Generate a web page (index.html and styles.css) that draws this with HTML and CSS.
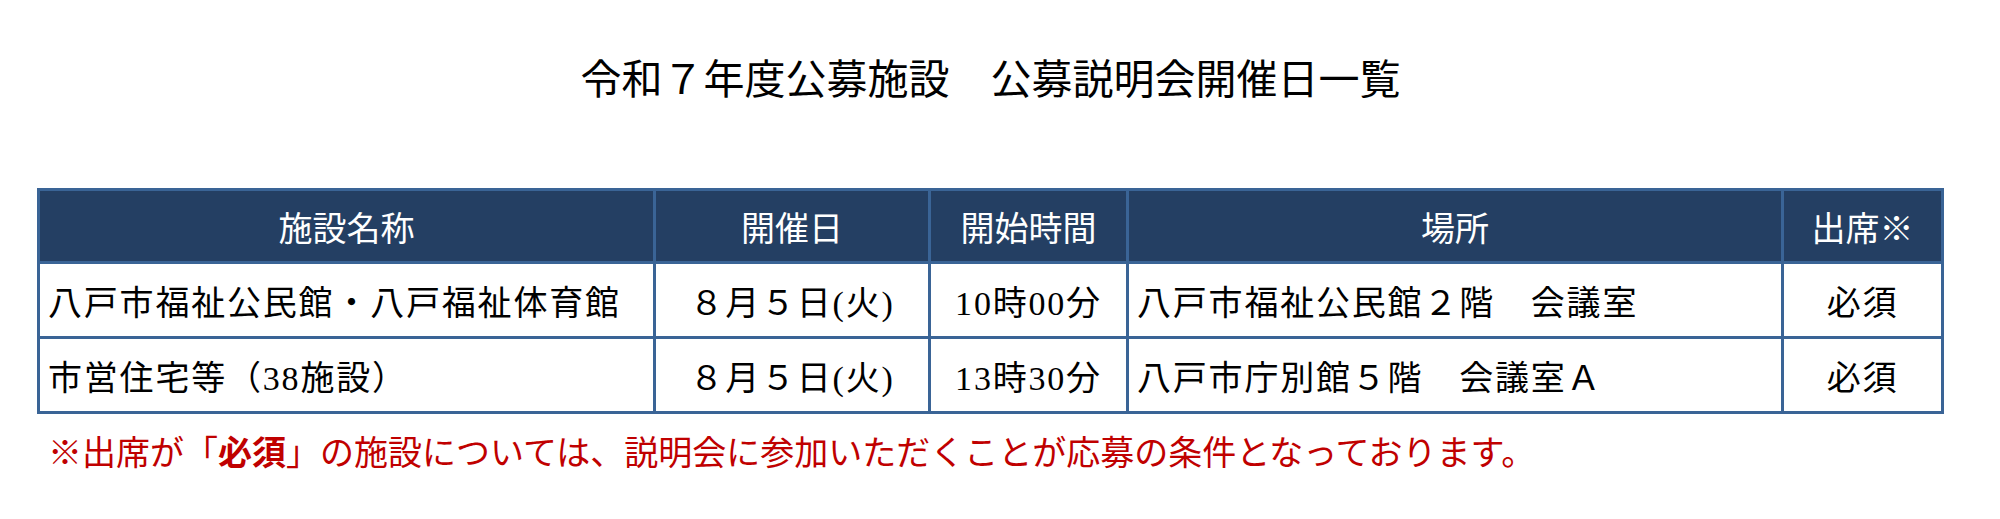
FILE: index.html
```html
<!DOCTYPE html>
<html lang="ja">
<head>
<meta charset="utf-8">
<title>令和７年度公募施設　公募説明会開催日一覧</title>
<link rel="stylesheet" href="styles.css">
</head>
<body>
<main class="page">
  <h1 class="title">令和７年度公募施設　公募説明会開催日一覧</h1>
  <table class="schedule">
    <thead>
      <tr>
        <th class="c-name">施設名称</th>
        <th class="c-date">開催日</th>
        <th class="c-time">開始時間</th>
        <th class="c-place">場所</th>
        <th class="c-att">出席※</th>
      </tr>
    </thead>
    <tbody>
      <tr>
        <td class="left">八戸市福祉公民館・八戸福祉体育館</td>
        <td class="center">８月５日(火)</td>
        <td class="center">10時00分</td>
        <td class="left">八戸市福祉公民館２階　会議室</td>
        <td class="center">必須</td>
      </tr>
      <tr>
        <td class="left">市営住宅等（38施設）</td>
        <td class="center">８月５日(火)</td>
        <td class="center">13時30分</td>
        <td class="left">八戸市庁別館５階　会議室Ａ</td>
        <td class="center">必須</td>
      </tr>
    </tbody>
  </table>
  <p class="note">※出席が「<strong>必須</strong>」の施設については、説明会に参加いただくことが応募の条件となっております。</p>
</main>
</body>
</html>
```
FILE: styles.css
```css
* { box-sizing: border-box; }

html, body {
  margin: 0;
  padding: 0;
  background: #ffffff;
}

.page {
  width: 1944px;
  padding-left: 37px;
  font-family: "Noto Sans CJK JP", sans-serif;
}

.title {
  margin: 52px 0 0 0;
  font-size: 41px;
  line-height: 49px;
  font-weight: 400;
  color: #000000;
  text-align: center;
}

.schedule {
  margin-top: 87px;
  width: 1907px;
  table-layout: fixed;
  border-collapse: separate;
  border-spacing: 0;
  border-top: 3px solid #3a6496;
  border-left: 3px solid #3a6496;
}

.schedule th,
.schedule td {
  border-right: 3px solid #3a6496;
  border-bottom: 3px solid #3a6496;
  padding: 0;
  white-space: nowrap;
}

.schedule th {
  height: 73px;
  background: #243f63;
  color: #ffffff;
  font-size: 34px;
  font-weight: 400;
  text-align: center;
  font-family: "Noto Sans CJK JP", sans-serif;
}

.c-name { width: 616px; }
.c-date { width: 275px; }
.c-time { width: 198px; }
.c-place { width: 655px; }
.c-att { width: 160px; }

.schedule td {
  height: 75px;
  font-family: "Liberation Serif", "Noto Sans CJK JP", serif;
  font-size: 34px;
  letter-spacing: 1.8px;
  color: #000000;
}

.schedule td.left {
  text-align: left;
  padding-left: 8px;
}

.schedule td.center {
  text-align: center;
}

.note {
  margin: 16px 0 0 11px;
  font-size: 34px;
  line-height: 41px;
  color: #c00000;
}

.note strong {
  font-weight: 700;
}
```
